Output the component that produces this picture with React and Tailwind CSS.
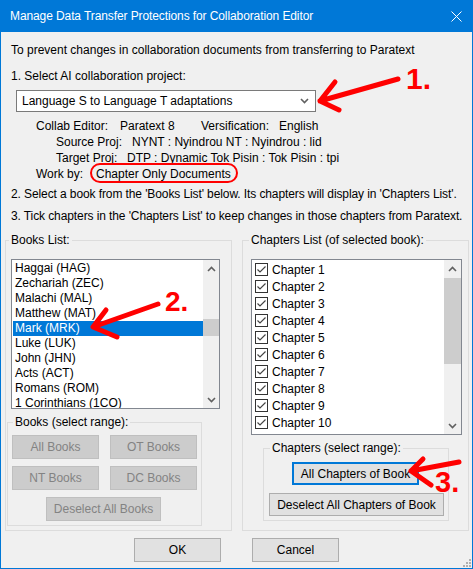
import { useState } from "react";

const books = ["Haggai (HAG)", "Zechariah (ZEC)", "Malachi (MAL)", "Matthew (MAT)", "Mark (MRK)", "Luke (LUK)", "John (JHN)", "Acts (ACT)", "Romans (ROM)", "1 Corinthians (1CO)"];
const chapters = [1, 2, 3, 4, 5, 6, 7, 8, 9, 10];

function Chevron({ up }) {
    return (
        <svg width="9" height="6" viewBox="0 0 9 6">
            <path d={up ? "M1 5 L4.5 1.5 L8 5" : "M1 1 L4.5 4.5 L8 1"} fill="none" stroke="#606060" strokeWidth="1.6" />
        </svg>
    );
}

function DisabledButton({ children, className = "" }) {
    return (
        <div className={`h-[24px] flex items-center justify-center bg-[#cccccc] border border-[#bfbfbf] text-[#838383] ${className}`}>
            {children}
        </div>
    );
}

function App() {
    const [selected, setSelected] = useState("Mark (MRK)");

    return (
        <div className="relative w-[473px] h-[569px] bg-[#0078d7] flex flex-col px-px pb-px font-['Liberation_Sans',Arial,sans-serif] text-[12px] text-black">
            {/* Title bar */}
            <div className="h-[32px] flex items-center justify-between pl-[9px] pr-[10px] text-white">
                <span className="tracking-[-0.1px]">Manage Data Transfer Protections for Collaboration Editor</span>
                <svg width="11" height="11" viewBox="0 0 11 11">
                    <path d="M0.5 0.5 L10.5 10.5 M10.5 0.5 L0.5 10.5" stroke="white" strokeWidth="1" />
                </svg>
            </div>

            <div className="relative flex-1 bg-[#f0f0f0] flex flex-col">
                <div className="mt-[11px] pl-[10px] leading-[15px]">To prevent changes in collaboration documents from transferring to Paratext</div>
                <div className="mt-[11px] pl-[10px] leading-[15px]">1. Select AI collaboration project:</div>

                <div className="mt-[6px] ml-[15px] w-[300px] h-[22px] bg-white border border-[#7a7a7a] flex items-center justify-between pl-[5px] pr-[6px]">
                    <span>Language S to Language T adaptations</span>
                    <Chevron />
                </div>

                {/* Project info */}
                <div className="mt-[6px] flex flex-col leading-[16px]">
                    <div className="flex pl-[35px]">
                        <span className="w-[84px]">Collab Editor:</span>
                        <span className="w-[81px]">Paratext 8</span>
                        <span className="w-[78px]">Versification:</span>
                        <span>English</span>
                    </div>
                    <div className="flex pl-[55px]">
                        <span className="w-[76px]">Source Proj:</span>
                        <span>NYNT : Nyindrou NT : Nyindrou : lid</span>
                    </div>
                    <div className="flex pl-[55px]">
                        <span className="w-[71px]">Target Proj:</span>
                        <span>DTP : Dynamic Tok Pisin : Tok Pisin : tpi</span>
                    </div>
                    <div className="flex pl-[35px]">
                        <span className="w-[60px]">Work by:</span>
                        <span>Chapter Only Documents</span>
                    </div>
                </div>

                <div className="mt-[5px] pl-[10px] leading-[15px] tracking-[-0.1px] whitespace-nowrap">2. Select a book from the 'Books List' below. Its chapters will display in 'Chapters List'.</div>
                <div className="mt-[7px] pl-[10px] leading-[15px] tracking-[-0.1px] whitespace-nowrap">3. Tick chapters in the 'Chapters List' to keep changes in those chapters from Paratext.</div>

                {/* Groups */}
                <div className="mt-[9px] pl-[4px] flex gap-[10px]">
                    <fieldset className="w-[227px] border border-[#dcdcdc] pb-[4px] flex flex-col">
                        <legend className="ml-[3px] px-[2px] leading-[15px]">Books List:</legend>
                        <div className="mt-[11px] ml-[5px] w-[209px] h-[150px] bg-white border border-[#828790] flex">
                            <div className="w-[191px] pt-[1px] pl-[1px] flex flex-col overflow-hidden">
                                {books.map((b) => (
                                    <div
                                        key={b}
                                        onClick={() => setSelected(b)}
                                        className={`h-[15px] shrink-0 leading-[15px] pl-[2px] whitespace-nowrap ${selected === b ? "bg-[#0078d7] text-white" : ""}`}
                                    >
                                        {b}
                                    </div>
                                ))}
                            </div>
                            <div className="w-[16px] bg-[#f0f0f0] flex flex-col">
                                <div className="h-[17px] flex items-center justify-center"><Chevron up /></div>
                                <div className="h-[42px]" />
                                <div className="h-[17px] bg-[#cdcdcd]" />
                                <div className="flex-1" />
                                <div className="h-[17px] flex items-center justify-center"><Chevron /></div>
                            </div>
                        </div>

                        <fieldset className="mt-[6px] ml-[1px] w-[195px] border border-[#dcdcdc] pb-[4px]">
                            <legend className="ml-[5px] px-[2px] leading-[15px]">Books (select range):</legend>
                            <div className="mt-[5px] ml-[4px] grid grid-cols-[87px_87px] gap-x-[11px] gap-y-[7px]">
                                <DisabledButton>All Books</DisabledButton>
                                <DisabledButton>OT Books</DisabledButton>
                                <DisabledButton>NT Books</DisabledButton>
                                <DisabledButton>DC Books</DisabledButton>
                            </div>
                            <DisabledButton className="mt-[7px] ml-[38px] w-[115px]">Deselect All Books</DisabledButton>
                        </fieldset>
                    </fieldset>

                    <fieldset className="w-[227px] border border-[#dcdcdc] pb-[4px] flex flex-col">
                        <legend className="ml-[6px] px-[2px] leading-[15px]">Chapters List (of selected book):</legend>
                        <div className="mt-[11px] ml-[8px] w-[211px] h-[176px] bg-white border border-[#828790] flex">
                            <div className="w-[192px] pt-[1px] flex flex-col overflow-hidden">
                                {chapters.map((c) => (
                                    <div key={c} className="h-[17px] shrink-0 flex items-center pl-[3px] gap-[4px]">
                                        <div className="w-[13px] h-[13px] border border-[#333333] bg-white flex items-center justify-center">
                                            <svg width="11" height="11" viewBox="0 0 11 11">
                                                <path d="M1.5 5.5 L4 8 L9.5 2.5" fill="none" stroke="#444444" strokeWidth="1.2" />
                                            </svg>
                                        </div>
                                        <span>Chapter {c}</span>
                                    </div>
                                ))}
                            </div>
                            <div className="w-[17px] bg-[#f0f0f0] flex flex-col">
                                <div className="h-[17px] flex items-center justify-center"><Chevron up /></div>
                                <div className="h-[86px] mt-[1px] bg-[#cdcdcd]" />
                                <div className="flex-1" />
                                <div className="h-[17px] flex items-center justify-center"><Chevron /></div>
                            </div>
                        </div>

                        <fieldset className="mt-[6px] ml-[20px] w-[186px] border border-[#dcdcdc] pb-[4px]">
                            <legend className="ml-[6px] px-[2px] leading-[15px]">Chapters (select range):</legend>
                            <div className="mt-[6px] ml-[28px] w-[127px] h-[23px] bg-[#e1e1e1] border-2 border-[#0078d7] flex items-center justify-center">
                                All Chapters of Book
                            </div>
                            <div className="mt-[8px] ml-[5px] w-[175px] h-[23px] bg-[#e1e1e1] border border-[#adadad] flex items-center justify-center">
                                Deselect All Chapters of Book
                            </div>
                        </fieldset>
                    </fieldset>
                </div>

                {/* OK / Cancel */}
                <div className="mt-[7px] flex justify-center gap-[31px]">
                    <div className="w-[87px] h-[24px] bg-[#e1e1e1] border border-[#adadad] flex items-center justify-center">OK</div>
                    <div className="w-[87px] h-[24px] bg-[#e1e1e1] border border-[#adadad] flex items-center justify-center">Cancel</div>
                </div>

                {/* resize grip */}
                <svg className="absolute right-[1px] bottom-[1px]" width="10" height="10" viewBox="0 0 10 10">
                    {[[8, 2], [8, 5], [8, 8], [5, 5], [5, 8], [2, 8]].map(([x, y]) => (
                        <rect key={`${x}-${y}`} x={x} y={y} width="2" height="2" fill="#b0b0b0" />
                    ))}
                </svg>
            </div>

            {/* Red annotations */}
            <svg className="absolute inset-0 pointer-events-none" width="473" height="569" viewBox="0 0 473 569">
                <g fill="none" stroke="#ff0000" strokeWidth="5" strokeLinecap="round" strokeLinejoin="round">
                    <path d="M398 79 L320 101 M335 82 L320 101 L339 110" />
                    <path d="M158 304 L93 327 M106 310 L93 327 L117 337" />
                    <path d="M459 462 L411 471 M423 459 L411 471 L431 485" />
                </g>
                <rect x="91" y="164" width="146" height="18" rx="9" fill="none" stroke="#ff0000" strokeWidth="2" />
            </svg>
            <span className="absolute left-[406px] top-[64px] text-[30px] leading-[30px] font-bold text-[#ff0000]">1.</span>
            <span className="absolute left-[165px] top-[288px] text-[28px] leading-[28px] font-bold text-[#ff0000]">2.</span>
            <span className="absolute left-[435px] top-[468px] text-[29px] leading-[29px] font-bold text-[#ff0000]">3.</span>
        </div>
    );
}

export default App;
